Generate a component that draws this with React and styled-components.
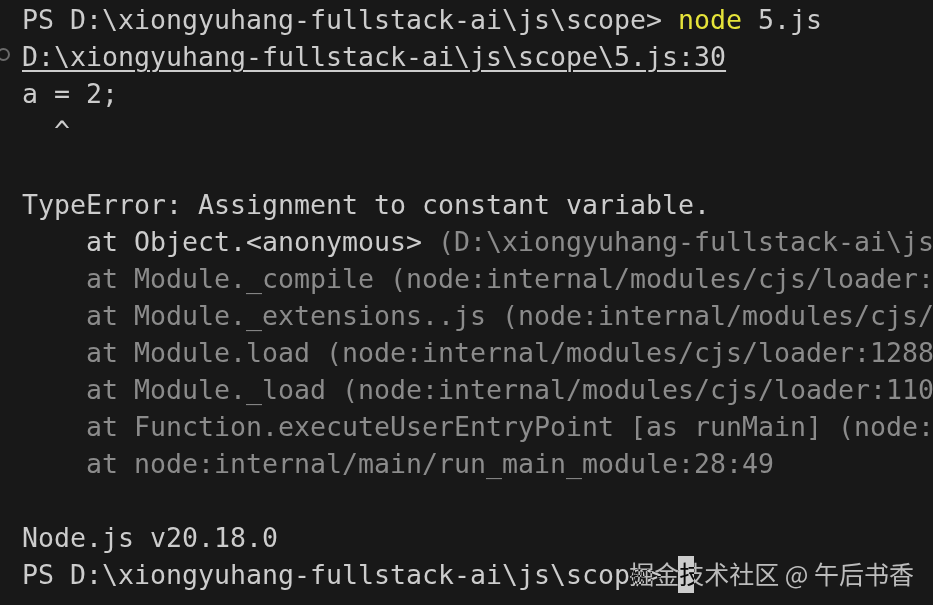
import React from 'react';
import styled, { createGlobalStyle } from 'styled-components';

const GlobalStyle = createGlobalStyle`
  html, body {
    margin: 0;
    padding: 0;
    background: #181818;
  }
`;

const prompt = 'PS D:\\xiongyuhang-fullstack-ai\\js\\scope> ';

const Terminal = () => {
  return (
    <Screen>
      <GlobalStyle />
      <Output>
        <Line>
          <Gutter />
          <Text>
            {prompt}
            <Cmd>node</Cmd> 5.js
          </Text>
        </Line>
        <Line>
          <Gutter>
            <Mark />
          </Gutter>
          <Text>
            <Link>D:\xiongyuhang-fullstack-ai\js\scope\5.js:30</Link>
          </Text>
        </Line>
        <Line>
          <Gutter />
          <Text>a = 2;</Text>
        </Line>
        <Line>
          <Gutter />
          <Text>{'  ^'}</Text>
        </Line>
        <Line>
          <Gutter />
          <Text />
        </Line>
        <Line>
          <Gutter />
          <Text>TypeError: Assignment to constant variable.</Text>
        </Line>
        <Line>
          <Gutter />
          <Text>
            {'    at Object.<anonymous> '}
            <Dim>(D:\xiongyuhang-fullstack-ai\js\scope\5.js:30:3)</Dim>
          </Text>
        </Line>
        {[
          '    at Module._compile (node:internal/modules/cjs/loader:1546:14)',
          '    at Module._extensions..js (node:internal/modules/cjs/loader:1689:10)',
          '    at Module.load (node:internal/modules/cjs/loader:1288:32)',
          '    at Module._load (node:internal/modules/cjs/loader:1104:12)',
          '    at Function.executeUserEntryPoint [as runMain] (node:internal/modules/run_main:174:12)',
          '    at node:internal/main/run_main_module:28:49',
        ].map((frame) => (
          <Line key={frame}>
            <Gutter />
            <Text>
              <Dim>{frame}</Dim>
            </Text>
          </Line>
        ))}
        <Line>
          <Gutter />
          <Text />
        </Line>
        <Line>
          <Gutter />
          <Text>Node.js v20.18.0</Text>
        </Line>
        <Line>
          <Gutter />
          <Text>
            {prompt}
            <Cursor />
          </Text>
        </Line>
      </Output>
      <Watermark>掘金技术社区 @ 午后书香</Watermark>
    </Screen>
  );
};

const Screen = styled.div`
  position: relative;
  width: 933px;
  height: 605px;
  overflow: hidden;
  background: #181818;
`;

const Output = styled.div`
  display: flex;
  flex-direction: column;
  padding-top: 1px;
  font-family: "DejaVu Sans Mono", "Liberation Mono", monospace;
  font-size: 26.58px;
  color: #cccccc;
`;

const Line = styled.div`
  display: flex;
  align-items: center;
  height: 37px;
  line-height: 37px;
`;

const Gutter = styled.div`
  flex: 0 0 22px;
  display: flex;
  align-items: center;
`;

const Mark = styled.span`
  flex: 0 0 auto;
  width: 9px;
  height: 9px;
  margin-left: -3px;
  margin-top: -4px;
  border: 2px solid #6a6a6a;
  border-radius: 50%;
`;

const Text = styled.div`
  flex: 1;
  white-space: pre;
  overflow: hidden;
`;

const Cmd = styled.span`
  color: #e6e43a;
`;

const Link = styled.span`
  text-decoration: underline;
  text-underline-offset: 4px;
  text-decoration-thickness: 2px;
`;

const Dim = styled.span`
  color: #8b8b8b;
`;

const Cursor = styled.span`
  display: inline-block;
  width: 16px;
  height: 37px;
  vertical-align: top;
  background: #cccccc;
`;

const Watermark = styled.div`
  position: absolute;
  right: 19px;
  bottom: 17px;
  font-family: "Noto Sans CJK SC", "Noto Sans", sans-serif;
  font-size: 25px;
  line-height: 30px;
  color: #d4d4d4;
  mix-blend-mode: difference;
`;

export default Terminal;
